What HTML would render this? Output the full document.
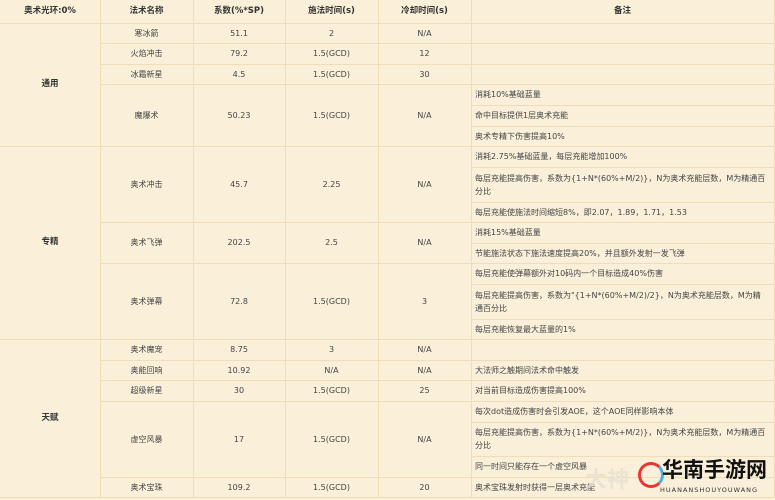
<!DOCTYPE html><html><head><meta charset="utf-8"><style>
body{margin:0;width:775px;height:500px;overflow:hidden;background:#faf0da;font-family:"DejaVu Sans","Noto Sans CJK SC",sans-serif;font-size:8px;color:#444}
.c{position:absolute;box-sizing:border-box;border-right:1px solid #f0dcb6;border-bottom:1px solid #f0dcb6;display:flex;align-items:center;justify-content:center;text-align:center;line-height:13px}
.n{justify-content:flex-start;text-align:left;padding-left:4px;padding-right:6px}
.h{font-weight:bold;color:#333;font-size:8.5px}
</style></head><body>
<div class="c h" style="left:0;top:0;width:101px;height:24px">奥术光环:0%</div>
<div class="c h" style="left:100px;top:0;width:94px;height:24px">法术名称</div>
<div class="c h" style="left:193px;top:0;width:93px;height:24px">系数(%*SP)</div>
<div class="c h" style="left:285px;top:0;width:94px;height:24px">施法时间(s)</div>
<div class="c h" style="left:378px;top:0;width:94px;height:24px">冷却时间(s)</div>
<div class="c h" style="left:471px;top:0;width:304px;height:24px">备注</div>

<div class="c h" style="left:0;top:23px;width:101px;height:124px">通用</div>
<div class="c h" style="left:0;top:146px;width:101px;height:194px">专精</div>
<div class="c h" style="left:0;top:339px;width:101px;height:159px">天赋</div>

<div class="c" style="left:100px;top:23px;width:94px;height:21px">寒冰箭</div>
<div class="c" style="left:193px;top:23px;width:93px;height:21px">51.1</div>
<div class="c" style="left:285px;top:23px;width:94px;height:21px">2</div>
<div class="c" style="left:378px;top:23px;width:94px;height:21px">N/A</div>
<div class="c n" style="left:471px;top:23px;width:304px;height:21px"></div>

<div class="c" style="left:100px;top:43px;width:94px;height:22px">火焰冲击</div>
<div class="c" style="left:193px;top:43px;width:93px;height:22px">79.2</div>
<div class="c" style="left:285px;top:43px;width:94px;height:22px">1.5(GCD)</div>
<div class="c" style="left:378px;top:43px;width:94px;height:22px">12</div>
<div class="c n" style="left:471px;top:43px;width:304px;height:22px"></div>

<div class="c" style="left:100px;top:64px;width:94px;height:21px">冰霜新星</div>
<div class="c" style="left:193px;top:64px;width:93px;height:21px">4.5</div>
<div class="c" style="left:285px;top:64px;width:94px;height:21px">1.5(GCD)</div>
<div class="c" style="left:378px;top:64px;width:94px;height:21px">30</div>
<div class="c n" style="left:471px;top:64px;width:304px;height:21px"></div>

<div class="c" style="left:100px;top:84px;width:94px;height:63px">魔爆术</div>
<div class="c" style="left:193px;top:84px;width:93px;height:63px">50.23</div>
<div class="c" style="left:285px;top:84px;width:94px;height:63px">1.5(GCD)</div>
<div class="c" style="left:378px;top:84px;width:94px;height:63px">N/A</div>
<div class="c n" style="left:471px;top:84px;width:304px;height:22px">消耗10%基础蓝量</div>
<div class="c n" style="left:471px;top:105px;width:304px;height:22px">命中目标提供1层奥术充能</div>
<div class="c n" style="left:471px;top:126px;width:304px;height:21px">奥术专精下伤害提高10%</div>

<div class="c" style="left:100px;top:146px;width:94px;height:77px">奥术冲击</div>
<div class="c" style="left:193px;top:146px;width:93px;height:77px">45.7</div>
<div class="c" style="left:285px;top:146px;width:94px;height:77px">2.25</div>
<div class="c" style="left:378px;top:146px;width:94px;height:77px">N/A</div>
<div class="c n" style="left:471px;top:146px;width:304px;height:22px">消耗2.75%基础蓝量，每层充能增加100%</div>
<div class="c n" style="left:471px;top:167px;width:304px;height:36px">每层充能提高伤害，系数为{1+N*(60%+M/2)}，N为奥术充能层数，M为精通百分比</div>
<div class="c n" style="left:471px;top:202px;width:304px;height:21px">每层充能使施法时间缩短8%，即2.07，1.89，1.71，1.53</div>

<div class="c" style="left:100px;top:222px;width:94px;height:42px">奥术飞弹</div>
<div class="c" style="left:193px;top:222px;width:93px;height:42px">202.5</div>
<div class="c" style="left:285px;top:222px;width:94px;height:42px">2.5</div>
<div class="c" style="left:378px;top:222px;width:94px;height:42px">N/A</div>
<div class="c n" style="left:471px;top:222px;width:304px;height:22px">消耗15%基础蓝量</div>
<div class="c n" style="left:471px;top:243px;width:304px;height:21px">节能施法状态下施法速度提高20%，并且额外发射一发飞弹</div>

<div class="c" style="left:100px;top:263px;width:94px;height:77px">奥术弹幕</div>
<div class="c" style="left:193px;top:263px;width:93px;height:77px">72.8</div>
<div class="c" style="left:285px;top:263px;width:94px;height:77px">1.5(GCD)</div>
<div class="c" style="left:378px;top:263px;width:94px;height:77px">3</div>
<div class="c n" style="left:471px;top:263px;width:304px;height:22px">每层充能使弹幕额外对10码内一个目标造成40%伤害</div>
<div class="c n" style="left:471px;top:284px;width:304px;height:36px">每层充能提高伤害，系数为"{1+N*(60%+M/2)/2}，N为奥术充能层数，M为精通百分比</div>
<div class="c n" style="left:471px;top:319px;width:304px;height:21px">每层充能恢复最大蓝量的1%</div>

<div class="c" style="left:100px;top:339px;width:94px;height:22px">奥术魔宠</div>
<div class="c" style="left:193px;top:339px;width:93px;height:22px">8.75</div>
<div class="c" style="left:285px;top:339px;width:94px;height:22px">3</div>
<div class="c" style="left:378px;top:339px;width:94px;height:22px">N/A</div>
<div class="c n" style="left:471px;top:339px;width:304px;height:22px"></div>

<div class="c" style="left:100px;top:360px;width:94px;height:21px">奥能回响</div>
<div class="c" style="left:193px;top:360px;width:93px;height:21px">10.92</div>
<div class="c" style="left:285px;top:360px;width:94px;height:21px">N/A</div>
<div class="c" style="left:378px;top:360px;width:94px;height:21px">N/A</div>
<div class="c n" style="left:471px;top:360px;width:304px;height:21px">大法师之触期间法术命中触发</div>

<div class="c" style="left:100px;top:380px;width:94px;height:22px">超级新星</div>
<div class="c" style="left:193px;top:380px;width:93px;height:22px">30</div>
<div class="c" style="left:285px;top:380px;width:94px;height:22px">1.5(GCD)</div>
<div class="c" style="left:378px;top:380px;width:94px;height:22px">25</div>
<div class="c n" style="left:471px;top:380px;width:304px;height:22px">对当前目标造成伤害提高100%</div>

<div class="c" style="left:100px;top:401px;width:94px;height:77px">虚空风暴</div>
<div class="c" style="left:193px;top:401px;width:93px;height:77px">17</div>
<div class="c" style="left:285px;top:401px;width:94px;height:77px">1.5(GCD)</div>
<div class="c" style="left:378px;top:401px;width:94px;height:77px">N/A</div>
<div class="c n" style="left:471px;top:401px;width:304px;height:22px">每次dot造成伤害时会引发AOE，这个AOE同样影响本体</div>
<div class="c n" style="left:471px;top:422px;width:304px;height:35px">每层充能提高伤害，系数为{1+N*(60%+M/2)}，N为奥术充能层数，M为精通百分比</div>
<div class="c n" style="left:471px;top:456px;width:304px;height:22px">同一时间只能存在一个虚空风暴</div>

<div class="c" style="left:100px;top:477px;width:94px;height:21px">奥术宝珠</div>
<div class="c" style="left:193px;top:477px;width:93px;height:21px">109.2</div>
<div class="c" style="left:285px;top:477px;width:94px;height:21px">1.5(GCD)</div>
<div class="c" style="left:378px;top:477px;width:94px;height:21px">20</div>
<div class="c n" style="left:471px;top:477px;width:304px;height:21px">奥术宝珠发射时获得一层奥术充能</div>

<div style="position:absolute;left:585px;top:462px;font-size:22px;font-weight:bold;color:#e8e0d0;opacity:.8;white-space:nowrap">大神</div>
<div style="position:absolute;left:638px;top:462px;width:26px;height:26px;border-radius:50%;border:3px solid #e33;border-right-color:#4ab0e8;box-sizing:border-box"></div>
<div style="position:absolute;left:662px;top:458px;font-size:21px;line-height:24px;font-weight:bold;color:#111;white-space:nowrap">华南手游网</div>
<div style="position:absolute;left:660px;top:486px;font-size:6.5px;color:#333;letter-spacing:1px;white-space:nowrap">HUANANSHOUYOUWANG</div>
</body></html>
